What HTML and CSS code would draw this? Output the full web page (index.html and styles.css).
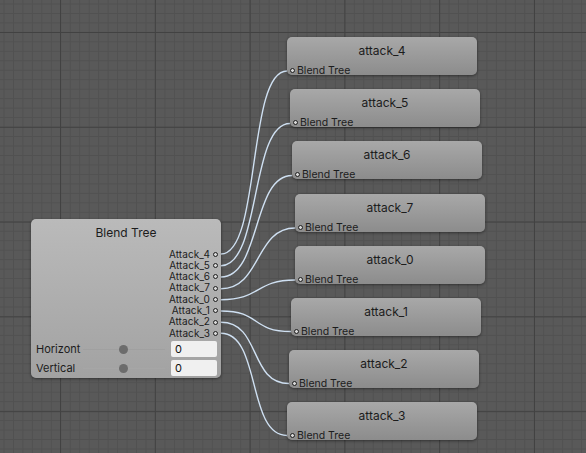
FILE: index.html
```html
<!DOCTYPE html>
<html>
<head>
<meta charset="utf-8">
<link rel="stylesheet" href="styles.css">
</head>
<body>
<div class="canvas">
  <svg class="wires" width="586" height="453" viewBox="0 0 586 453">
    <path d="M221 254 C261 254 247 71 287 71"/>
    <path d="M221 265.7 C261 265.7 250 123.5 290 123.5"/>
    <path d="M221 277 C261 277 252 175.5 292 175.5"/>
    <path d="M221 288.7 C261 288.7 255 228 295 228"/>
    <path d="M221 299.7 C261 299.7 255 280 295 280"/>
    <path d="M221 311 C261 311 251 331.5 291 331.5"/>
    <path d="M221 322.3 C261 322.3 249 383.5 289 383.5"/>
    <path d="M221 333.3 C261 333.3 247 435.5 287 435.5"/>
  </svg>

  <div class="node blend">
    <div class="node-title">Blend Tree</div>
    <div class="outputs">
      <div class="out">Attack_4<span class="port"></span></div>
      <div class="out">Attack_5<span class="port"></span></div>
      <div class="out">Attack_6<span class="port"></span></div>
      <div class="out">Attack_7<span class="port"></span></div>
      <div class="out">Attack_0<span class="port"></span></div>
      <div class="out">Attack_1<span class="port"></span></div>
      <div class="out">Attack_2<span class="port"></span></div>
      <div class="out">Attack_3<span class="port"></span></div>
    </div>
    <div class="params">
      <div class="param">
        <span class="param-label">Horizont</span>
        <span class="slider"><span class="thumb"></span></span>
        <span class="field">0</span>
      </div>
      <div class="param">
        <span class="param-label">Vertical</span>
        <span class="slider faint"><span class="thumb"></span></span>
        <span class="field">0</span>
      </div>
    </div>
  </div>

  <div class="node state s4"><div class="state-title">attack_4</div><div class="in"><span class="port"></span>Blend Tree</div></div>
  <div class="node state s5"><div class="state-title">attack_5</div><div class="in"><span class="port"></span>Blend Tree</div></div>
  <div class="node state s6"><div class="state-title">attack_6</div><div class="in"><span class="port"></span>Blend Tree</div></div>
  <div class="node state s7"><div class="state-title">attack_7</div><div class="in"><span class="port"></span>Blend Tree</div></div>
  <div class="node state s0"><div class="state-title">attack_0</div><div class="in"><span class="port"></span>Blend Tree</div></div>
  <div class="node state s1"><div class="state-title">attack_1</div><div class="in"><span class="port"></span>Blend Tree</div></div>
  <div class="node state s2"><div class="state-title">attack_2</div><div class="in"><span class="port"></span>Blend Tree</div></div>
  <div class="node state s3"><div class="state-title">attack_3</div><div class="in"><span class="port"></span>Blend Tree</div></div>
</div>
</body>
</html>
```

FILE: styles.css
```css
html, body {
  margin: 0;
  padding: 0;
}

body {
  font-family: Inter, "Noto Sans", "Liberation Sans", sans-serif;
  color: #1c1c1c;
}

.canvas {
  position: relative;
  width: 586px;
  height: 453px;
  overflow: hidden;
  background-color: #595959;
  background-image:
    linear-gradient(to right, #424242 1px, transparent 1px),
    linear-gradient(to bottom, #424242 1px, transparent 1px),
    linear-gradient(to right, #515151 1px, transparent 1px),
    linear-gradient(to bottom, #515151 1px, transparent 1px);
  background-size: 94.8px 100%, 100% 94.8px, 9.48px 100%, 100% 9.48px;
  background-position: 60px 0, 0 32px, 3.5px 0, 0 3.5px;
}

.wires {
  position: absolute;
  left: 0;
  top: 0;
  fill: none;
  stroke: #cfe0f2;
  stroke-width: 1.4;
}

.node {
  position: absolute;
  box-sizing: border-box;
  width: 190px;
  border-radius: 5px;
  box-shadow: 0 1px 3px rgba(0, 0, 0, 0.45);
}

.port {
  display: inline-block;
  box-sizing: border-box;
  width: 5px;
  height: 5px;
  border: 1px solid #1e1e1e;
  border-radius: 50%;
  background: #d8d8d8;
}

/* Blend tree node */
.blend {
  left: 31px;
  top: 219px;
  height: 159px;
  background: linear-gradient(to bottom, #bababa, #a2a2a2);
  display: flex;
  flex-direction: column;
}

.node-title {
  margin-top: 7px;
  height: 14px;
  line-height: 14px;
  text-align: center;
  font-size: 12px;
}

.outputs {
  margin-top: 8.5px;
  padding-right: 3px;
  display: flex;
  flex-direction: column;
  align-items: flex-end;
}

.out {
  height: 11.33px;
  line-height: 11.33px;
  font-size: 10px;
  letter-spacing: 0.1px;
  display: flex;
  align-items: center;
  gap: 3px;
}

.params {
  margin-top: 2px;
  padding: 0 4px 0 5px;
  display: flex;
  flex-direction: column;
  gap: 3px;
}

.param {
  height: 16px;
  display: flex;
  align-items: center;
  font-size: 11px;
}

.param-label {
  width: 47px;
}

.slider {
  position: relative;
  width: 82px;
  height: 1px;
  background: #a0a0a0;
}

.slider.faint {
  background: #a6a6a6;
}

.thumb {
  position: absolute;
  left: 36px;
  top: -4px;
  width: 9px;
  height: 9px;
  border-radius: 50%;
  background: #6c6c6c;
}

.field {
  margin-left: auto;
  box-sizing: border-box;
  width: 46px;
  height: 16px;
  line-height: 16px;
  padding-left: 4px;
  background: #f0f0f0;
  border-radius: 2px;
  font-size: 11px;
  color: #111;
}

/* State nodes */
.state {
  height: 38px;
  background: linear-gradient(to bottom, #a8a8a8, #8c8c8c);
  display: flex;
  flex-direction: column;
}

.state-title {
  margin-top: 7px;
  height: 13px;
  line-height: 13px;
  text-align: center;
  font-size: 12px;
}

.in {
  margin-top: auto;
  margin-bottom: 0;
  padding-left: 3px;
  height: 9px;
  line-height: 9px;
  display: flex;
  align-items: center;
  gap: 2px;
  font-size: 10.5px;
}

.s4 { left: 287px; top: 37px; }
.s5 { left: 290px; top: 89px; }
.s6 { left: 292px; top: 141px; }
.s7 { left: 295px; top: 194px; }
.s0 { left: 295px; top: 246px; }
.s1 { left: 291px; top: 298px; }
.s2 { left: 289px; top: 350px; }
.s3 { left: 287px; top: 402px; }
```
